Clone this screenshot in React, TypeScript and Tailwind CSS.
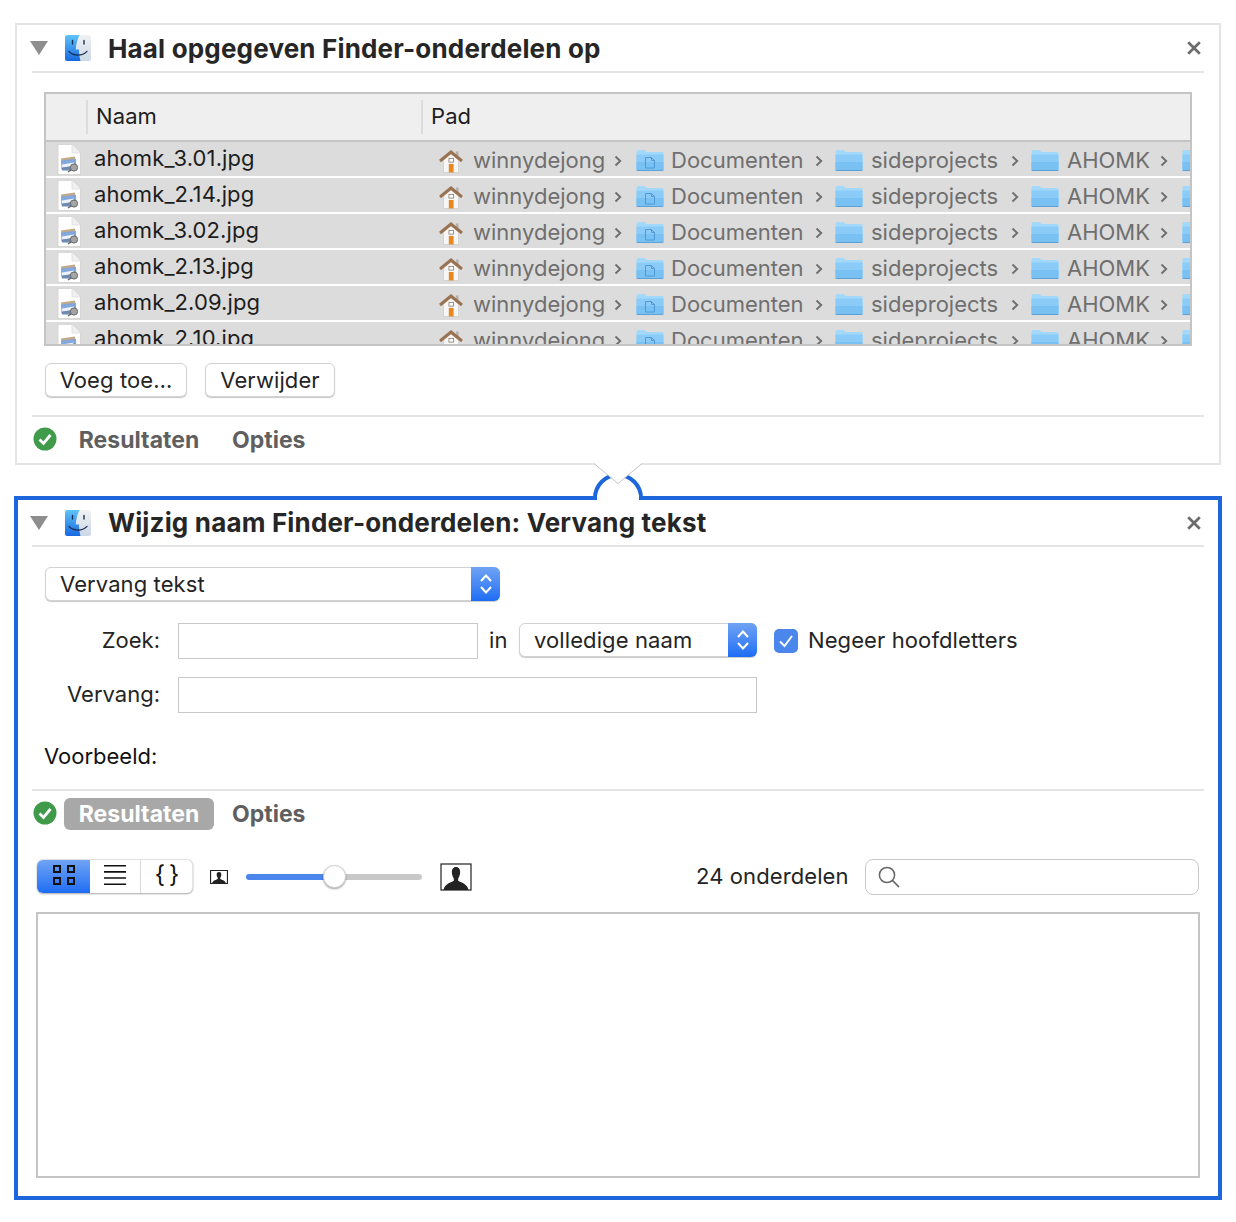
import type { ReactNode } from "react";

const FILES = ["ahomk_3.01.jpg", "ahomk_2.14.jpg", "ahomk_3.02.jpg", "ahomk_2.13.jpg", "ahomk_2.09.jpg", "ahomk_2.10.jpg"];

function FinderIcon() {
  return (
    <svg width="28" height="28" viewBox="0 0 28 28" className="shrink-0">
      <defs>
        <linearGradient id="fl" x1="0" y1="0" x2="0" y2="1">
          <stop offset="0" stopColor="#5fc4f8" />
          <stop offset="1" stopColor="#1768e0" />
        </linearGradient>
        <linearGradient id="fr" x1="0" y1="0" x2="0" y2="1">
          <stop offset="0" stopColor="#f0f2f4" />
          <stop offset="1" stopColor="#cbd8e6" />
        </linearGradient>
      </defs>
      <rect x="1" y="1" width="26" height="26" rx="2.5" fill="url(#fr)" />
      <path d="M3.5 1H15.5C13 6 12 11 11.8 15.5H15C15 20 15.7 24 16.5 27H3.5A2.5 2.5 0 0 1 1 24.5V3.5A2.5 2.5 0 0 1 3.5 1Z" fill="url(#fl)" />
      <path d="M8.5 6.5V10M20 6.5V10" stroke="#1c2f55" strokeWidth="1.4" strokeLinecap="round" />
      <path d="M5 17.5C9 22 18 22.5 23 17.3" fill="none" stroke="#1c2f55" strokeWidth="1.2" strokeLinecap="round" />
    </svg>
  );
}

function Triangle() {
  return (
    <svg width="18" height="14" viewBox="0 0 18 14" className="shrink-0">
      <path d="M0 0H18L9 14Z" fill="#8e8e8e" />
    </svg>
  );
}

function CloseIcon() {
  return (
    <svg width="14" height="14" viewBox="0 0 14 14" className="shrink-0">
      <path d="M1.2 1.2L12.8 12.8M12.8 1.2L1.2 12.8" stroke="#6c6c6c" strokeWidth="2.7" />
    </svg>
  );
}

function FileIcon() {
  return (
    <svg width="24" height="31" viewBox="0 0 24 31" className="shrink-0">
      <path d="M1 .5H15L23.5 9V30.5H1Z" fill="#fff" stroke="#d0d0d0" strokeWidth=".8" />
      <path d="M15 .5V9H23.5" fill="#f1f1f1" stroke="#dcdcdc" strokeWidth=".8" />
      <path d="M4 14.5L18 12.5L19 21L5 23Z" fill="#bfa988" />
      <path d="M4 16.5L19 15V22L4.5 25Z" fill="#80a8de" />
      <path d="M5 20.5L17 18.5V21.5L5 24Z" fill="#eef2f8" />
      <path d="M4.5 23.5L18 22V26.5H5Z" fill="#6d8bb2" />
      <circle cx="17" cy="23.5" r="3.6" fill="#a6a6a6" stroke="#666" strokeWidth="1" />
      <path d="M14 26L11 28" stroke="#666" strokeWidth="1.5" />
    </svg>
  );
}

function HouseIcon() {
  return (
    <svg width="24" height="24" viewBox="0 0 24 24" className="shrink-0">
      <path d="M4.5 11L12 5L19.5 11V23.5H4.5Z" fill="#f6f6f6" stroke="#c8c8c8" strokeWidth=".6" />
      <rect x="17" y="2.5" width="2.6" height="5.5" fill="#b3b3b3" />
      <path d="M1 12L12 3L23 12" fill="none" stroke="#9a7450" strokeWidth="3" />
      <rect x="9.8" y="15" width="4.8" height="8.5" fill="#e8861f" />
      <rect x="10" y="9.5" width="4.4" height="3.6" fill="#fff" stroke="#8a7a68" strokeWidth=".8" />
    </svg>
  );
}

function FolderIcon({ doc }: { doc?: boolean }) {
  return (
    <svg width="28" height="24" viewBox="0 0 28 24" className="shrink-0 -mt-[2px]">
      <path d="M.5 3.5A1.5 1.5 0 0 1 2 2H8.5L10.5 4H26A1.5 1.5 0 0 1 27.5 5.5V21.5A1.5 1.5 0 0 1 26 23H2A1.5 1.5 0 0 1 .5 21.5Z" fill="#a2d9fa" />
      <path d="M.5 6.5H27.5V21.5A1.5 1.5 0 0 1 26 23H2A1.5 1.5 0 0 1 .5 21.5Z" fill="#8accf7" />
      <path d="M.5 14H27.5V21.5A1.5 1.5 0 0 1 26 23H2A1.5 1.5 0 0 1 .5 21.5Z" fill="#79c1f2" />
      <path d="M.5 22H27.5V21.8A1.5 1.5 0 0 1 26 23H2A1.5 1.5 0 0 1 .5 21.8Z" fill="#5c9fd0" />
      {doc && <path d="M9.5 9.5H15.5L18.5 12.5V20H9.5ZM15.5 9.5V12.5H18.5" fill="none" stroke="#4f9ad6" strokeWidth="1" />}
    </svg>
  );
}

function Chevron() {
  return (
    <svg width="8" height="12" viewBox="0 0 8 12" className="shrink-0">
      <path d="M1.5 1.5L6.2 6L1.5 10.5" fill="none" stroke="#6e6e6e" strokeWidth="1.9" />
    </svg>
  );
}

function Crumb({ icon, label, className, textClass, gapClass }: { icon: ReactNode; label: string; className: string; textClass: string; gapClass: string }) {
  return (
    <div className={`flex items-center shrink-0 ${className}`}>
      {icon}
      <span className={`whitespace-nowrap ${textClass}`}>{label}</span>
      <span className={gapClass}>
        <Chevron />
      </span>
    </div>
  );
}

function PathCell() {
  return (
    <div className="flex items-center text-[22px] tracking-normal text-[#6f6f6f] pt-[3px]">
      <Crumb className="w-[197px]" icon={<HouseIcon />} label="winnydejong" textClass="w-[131px] ml-[10px]" gapClass="ml-[10px]" />
      <Crumb className="w-[199px]" icon={<FolderIcon doc />} label="Documenten" textClass="w-[133px] ml-[7px]" gapClass="ml-[11px]" />
      <Crumb className="w-[196px]" icon={<FolderIcon />} label="sideprojects" textClass="w-[128px] ml-[8px]" gapClass="ml-[12px]" />
      <Crumb className="w-[151px]" icon={<FolderIcon />} label="AHOMK" textClass="w-[82px] ml-[8px]" gapClass="ml-[11px]" />
      <FolderIcon />
    </div>
  );
}

function FileTable() {
  return (
    <div className="mx-[12px] mt-[19px] h-[254px] border-2 border-[#c4c4c4] overflow-hidden">
      <div className="flex h-[46px] items-center bg-[#efefef] text-[22px] text-[#1d1d1d]">
        <div className="w-[40px] h-[34px]" />
        <div className="flex items-center w-[335px] h-[34px] border-l-2 border-[#dcdcdc] pl-[8px] pb-[1px]">Naam</div>
        <div className="flex items-center h-[34px] border-l-2 border-[#dcdcdc] pl-[8px] pb-[1px]">Pad</div>
      </div>
      <div className="h-[2px] bg-[#c4c4c4]" />
      {FILES.map((name) => (
        <div key={name} className="flex items-center h-[34px] mb-[2px] bg-[#dcdcdc]">
          <div className="flex items-center shrink-0 w-[393px] pl-[11px] text-[22px] text-[#1d1d1d]">
            <FileIcon />
            <span className="ml-[13px] -mt-[2px]">{name}</span>
          </div>
          <PathCell />
        </div>
      ))}
    </div>
  );
}

function CardHeader({ title, className }: { title: string; className: string }) {
  return (
    <div className={`flex items-center border-b-2 border-[#e4e4e4] box-content ${className}`}>
      <div className="-ml-[2px]"><Triangle /></div>
      <div className="ml-[16px]"><FinderIcon /></div>
      <h2 className="ml-[16px] flex-1 text-[26px] tracking-[0.17px] font-bold text-[#262626]">{title}</h2>
      <div className="mr-[3px]"><CloseIcon /></div>
    </div>
  );
}

function CheckBadge() {
  return (
    <svg width="24" height="24" viewBox="0 0 24 24" className="shrink-0 ml-[1px] -mt-[2px]">
      <circle cx="12" cy="12" r="11.5" fill="#3f9a4a" />
      <path d="M6.5 12.5L10.5 16.5L17.5 8" fill="none" stroke="#fff" strokeWidth="2.8" />
    </svg>
  );
}

function ActionFooter({ active }: { active?: boolean }) {
  return (
    <div className="flex items-center h-[32px] text-[23px] leading-[32px] tracking-normal font-bold text-[#5f5f5f]">
      <CheckBadge />
      <div className={`ml-[7px] flex items-center justify-center w-[150px] h-[32px] rounded-[6px] ${active ? "bg-[#a8a8a8] text-white" : ""}`}>Resultaten</div>
      <div className="ml-[18px]">Opties</div>
    </div>
  );
}

function Stepper() {
  return (
    <div className="w-[29px] self-stretch -my-px -mr-px rounded-r-[6px] bg-gradient-to-b from-[#6fa3f3] to-[#1c6cf5] flex items-center justify-center">
      <svg width="14" height="24" viewBox="0 0 14 24">
        <path d="M2 9L7 3.5L12 9M2 15L7 20.5L12 15" fill="none" stroke="#fff" strokeWidth="2.1" />
      </svg>
    </div>
  );
}

function PopUp({ label, className }: { label: string; className: string }) {
  return (
    <div className={`flex items-center h-[34px] bg-white border border-[#d2d2d2] rounded-[6px] shadow-[0_1px_1px_rgba(0,0,0,0.22)] text-[22px] text-[#242424] ${className}`}>
      <span className="flex-1 pl-[14px]">{label}</span>
      <Stepper />
    </div>
  );
}

function PushButton({ label, className }: { label: string; className: string }) {
  return (
    <button className={`h-[34px] bg-white border border-[#d2d2d2] rounded-[6px] shadow-[0_1px_1px_rgba(0,0,0,0.22)] text-[22px] text-[#242424] ${className}`}>
      {label}
    </button>
  );
}

function Silhouette({ big }: { big?: boolean }) {
  return (
    <svg width={big ? 32 : 18} height={big ? 28 : 14} viewBox="0 0 32 28" preserveAspectRatio="none" className="shrink-0">
      <rect x="1" y="1" width="30" height="26" fill="#fff" stroke="#222" strokeWidth={big ? 1.2 : 2} />
      <path d="M16 4C19 4 20.4 6.5 20.1 10C19.9 12.5 18.9 14.5 18.2 15.5V17.8C20 19.5 27 20 28.5 27H3.5C5 20 12 19.5 13.8 17.8V15.5C13.1 14.5 12.1 12.5 11.9 10C11.6 6.5 13 4 16 4Z" fill="#222" />
    </svg>
  );
}

function ViewSwitcher() {
  return (
    <div className="flex self-start w-[156px] h-[34px] rounded-[6px] bg-white shadow-[0_1px_2px_rgba(0,0,0,0.35)] border-r border-t border-[#e2e2e2]">
      <div className="w-[53px] rounded-l-[6px] bg-gradient-to-b from-[#6fa3f3] to-[#1c6cf5] flex items-center justify-center pb-[4px]">
        <svg width="22" height="20" viewBox="0 0 22 20">
          <path d="M1 1H7V7H1ZM15 1H21V7H15ZM1 13H7V19H1ZM15 13H21V19H15Z" fill="none" stroke="#111" strokeWidth="2" />
        </svg>
      </div>
      <div className="w-[51px] border-r border-[#d8d8d8] flex items-center justify-center pb-[4px]">
        <svg width="22" height="20" viewBox="0 0 22 20">
          <path d="M0 .8H22M0 6.9H22M0 13H22M0 19.2H22" stroke="#111" strokeWidth="1.6" />
        </svg>
      </div>
      <div className="flex-1 flex items-center justify-center text-[24px] text-[#111] tracking-[4px] pl-[5px] pb-[4px]">{"{}"}</div>
    </div>
  );
}

function Slider() {
  return (
    <div className="flex items-center w-[176px] h-[24px] relative">
      <div className="h-[6px] w-[88px] rounded-l-full bg-[#4a86ec]" />
      <div className="h-[6px] flex-1 rounded-r-full bg-[#c8c8c8]" />
      <div className="absolute left-[77px] top-0 w-[23px] h-[23px] rounded-full bg-white border border-[#d0d0d0] shadow-[0_1px_2px_rgba(0,0,0,0.35)]" />
    </div>
  );
}

function Connector() {
  return (
    <svg width="60" height="44" viewBox="0 0 60 44" className="absolute left-[588px] top-[460px]">
      <path d="M6.8 38A23 23 0 0 1 53.2 38Z" fill="#fff" />
      <path d="M7 38A23 23 0 0 1 53 38" fill="none" stroke="#1e66dc" strokeWidth="4" />
      <rect x="9" y="35" width="42" height="6" fill="#fff" />
      <path d="M6 3H54L30 23.5Z" fill="#fff" />
      <path d="M6 3.5L30 23.5L54 3.5" fill="none" stroke="#c4c4c4" strokeWidth="1" />
    </svg>
  );
}

export default function App() {
  return (
    <div className="relative w-[1236px] h-[1222px] bg-white pt-[23px] px-[14px] tracking-[0.1px] [font-family:Inter,'Noto_Sans',sans-serif]">
      {/* Get specified Finder items */}
      <section className="mx-px h-[442px] border-2 border-[#e4e4e4] px-[15px]">
        <CardHeader title="Haal opgegeven Finder-onderdelen op" className="h-[46px]" />
        <FileTable />
        <div className="flex mt-[17px] ml-[13px] gap-[18px]">
          <PushButton label="Voeg toe…" className="w-[142px]" />
          <PushButton label="Verwijder" className="w-[130px]" />
        </div>
        <div className="h-[2px] mt-[18px] bg-[#e4e4e4]" />
        <div className="h-[46px] flex items-center">
          <ActionFooter />
        </div>
      </section>

      {/* Rename Finder items */}
      <section className="mt-[31px] h-[704px] border-4 border-[#1e66dc] px-[14px]">
        <CardHeader title="Wijzig naam Finder-onderdelen: Vervang tekst" className="h-[45px]" />
        <PopUp label="Vervang tekst" className="w-[455px] mt-[20px] ml-[13px]" />

        <div className="flex items-center mt-[22px] h-[36px] text-[22px] text-[#242424]">
          <span className="w-[128px] text-right tracking-normal pb-[2px]">Zoek:</span>
          <div className="ml-[18px] w-[300px] h-[36px] border border-[#c8c8c8]" />
          <span className="ml-[11px] w-[30px] pb-[2px]">in</span>
          <PopUp label="volledige naam" className="w-[238px] -mt-[2px]" />
          <svg width="24" height="24" viewBox="0 0 24 24" className="ml-[17px] shrink-0">
            <rect width="24" height="24" rx="5" fill="#4a86ec" />
            <path d="M6 12.5L10.5 17L18 7" fill="none" stroke="#fff" strokeWidth="2" />
          </svg>
          <span className="ml-[10px] pb-[2px]">Negeer hoofdletters</span>
        </div>

        <div className="flex items-center mt-[18px] h-[36px] text-[22px] text-[#242424]">
          <span className="w-[128px] text-right tracking-normal pb-[2px]">Vervang:</span>
          <div className="ml-[18px] w-[579px] h-[36px] border border-[#c8c8c8]" />
        </div>

        <div className="mt-[29px] ml-[12px] h-[28px] leading-[28px] text-[22px] tracking-normal text-[#111]">Voorbeeld:</div>
        <div className="h-[2px] mt-[19px] bg-[#e4e4e4]" />
        <div className="mt-[7px]">
          <ActionFooter active />
        </div>

        <div className="flex items-center mt-[29px] h-[36px] ml-[5px]">
          <ViewSwitcher />
          <div className="ml-[17px]"><Silhouette /></div>
          <div className="ml-[18px]"><Slider /></div>
          <div className="ml-[18px]"><Silhouette big /></div>
          <span className="ml-[224px] w-[169px] pb-[2px] text-[22px] text-[#242424] whitespace-nowrap">24 onderdelen</span>
          <div className="w-[334px] h-[36px] flex items-center pl-[12px] border border-[#c8c8c8] rounded-[8px]">
            <svg width="22" height="22" viewBox="0 0 22 22">
              <circle cx="9" cy="9" r="7.6" fill="none" stroke="#666" strokeWidth="1.5" />
              <path d="M14.5 14.5L21 21" stroke="#666" strokeWidth="1.7" />
            </svg>
          </div>
        </div>

        <div className="mt-[17px] mx-[4px] h-[266px] border-2 border-[#c4c4c4]" />
      </section>

      <Connector />
    </div>
  );
}
